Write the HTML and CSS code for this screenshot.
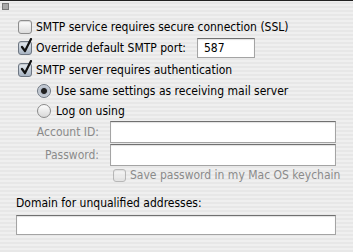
FILE: index.html
```html
<!DOCTYPE html>
<html lang="en">
<head>
  <meta charset="UTF-8">
  <title>Mail Account Options</title>
  <link rel="stylesheet" href="styles.css">
</head>
<body>
  <div class="panel">
    <div class="topline"></div>
    <div class="grip"></div>

    <div class="options">
      <label class="row">
        <span class="check"></span>
        <span class="label">SMTP service requires secure connection (SSL)</span>
      </label>
      <label class="row port-row">
        <span class="check checked">
          <svg viewBox="0 0 14 16" width="14" height="16"><path d="M3 9 L6 13 L12 1" fill="none" stroke="#111" stroke-width="2.2" stroke-linecap="round" stroke-linejoin="round"/></svg>
        </span>
        <span class="label">Override default SMTP port:</span>
        <span class="field port">587</span>
      </label>
      <label class="row tall">
        <span class="check checked">
          <svg viewBox="0 0 14 16" width="14" height="16"><path d="M3 9 L6 13 L12 1" fill="none" stroke="#111" stroke-width="2.2" stroke-linecap="round" stroke-linejoin="round"/></svg>
        </span>
        <span class="label">SMTP server requires authentication</span>
      </label>

      <div class="radios">
        <label class="row">
          <span class="radio on"></span>
          <span class="label">Use same settings as receiving mail server</span>
        </label>
        <label class="row">
          <span class="radio"></span>
          <span class="label">Log on using</span>
        </label>
      </div>

      <div class="creds">
        <span class="cred-label">Account ID:</span>
        <span class="field"></span>
        <span class="cred-label">Password:</span>
        <span class="field"></span>
        <span></span>
        <label class="row keychain">
          <span class="check small"></span>
          <span class="label">Save password in my Mac OS keychain</span>
        </label>
      </div>
    </div>

    <div class="domain">
      <div class="label">Domain for unqualified addresses:</div>
      <span class="field wide"></span>
    </div>
  </div>
</body>
</html>
```

FILE: styles.css
```css
body {
  margin: 0;
  width: 353px;
  height: 252px;
  overflow: hidden;
  font-family: "DejaVu Sans Condensed", "DejaVu Sans", sans-serif;
  font-size: 12px;
  color: #000;
  background: repeating-linear-gradient(180deg, #efefef 0, #efefef 2px, #e7e7e7 2px, #e7e7e7 4px);
}

.panel {
  height: 252px;
}

.topline {
  height: 1px;
  background: #222;
}

.grip {
  width: 5px;
  height: 5px;
  margin: 2px 0 0 2px;
  background: #a8a8a8;
  border: 1px solid #777;
}

.options {
  padding: 7px 0 0 18px;
}

.row {
  display: flex;
  align-items: center;
  gap: 4px;
  height: 20px;
  white-space: nowrap;
}

.port-row,
.tall {
  height: 22px;
}

.check {
  width: 12px;
  height: 12px;
  border: 1px solid #8c8c8c;
  border-radius: 3px;
  background: linear-gradient(180deg, #fdfdfd, #dcdcdc);
  box-shadow: inset 0 1px 1px rgba(0, 0, 0, 0.15);
  position: relative;
  flex: none;
}

.check.checked {
  background: linear-gradient(180deg, #e6ecf2, #a7b3c2);
  border-color: #6d7682;
}

.check svg {
  position: absolute;
  left: 0;
  top: -4px;
}

.check.small {
  width: 11px;
  height: 11px;
  opacity: 0.55;
}

.field {
  display: block;
  height: 20px;
  background: #fff;
  border: 1px solid #a4a4a4;
  border-top-color: #707070;
  box-shadow: inset 0 1px 1px rgba(0, 0, 0, 0.12);
}

.port {
  width: 50px;
  height: 18px;
  margin-left: 7px;
  padding-left: 6px;
  line-height: 18px;
}

.radios {
  padding-left: 19px;
}

.radio {
  width: 12px;
  height: 12px;
  border: 1px solid #8a8a8a;
  border-radius: 50%;
  background: linear-gradient(180deg, #fdfdfd, #d8d8d8);
  flex: none;
  margin-right: 1px;
}

.radio.on {
  background: radial-gradient(circle, #222 0, #222 2.5px, #b4bcc8 3.5px, #e8ecf0 100%);
  border-color: #6d7682;
}

.creds {
  display: grid;
  grid-template-columns: 81px 226px;
  column-gap: 11px;
  row-gap: 1px;
  align-items: center;
}

.cred-label {
  text-align: right;
  color: #8a8a8a;
}

.keychain {
  color: #8a8a8a;
  padding-left: 3px;
  height: 14px;
  margin-top: 1px;
}

.domain {
  padding: 14px 0 0 16px;
}

.domain .field.wide {
  width: 318px;
  height: 18px;
  margin-top: 5px;
}
```
